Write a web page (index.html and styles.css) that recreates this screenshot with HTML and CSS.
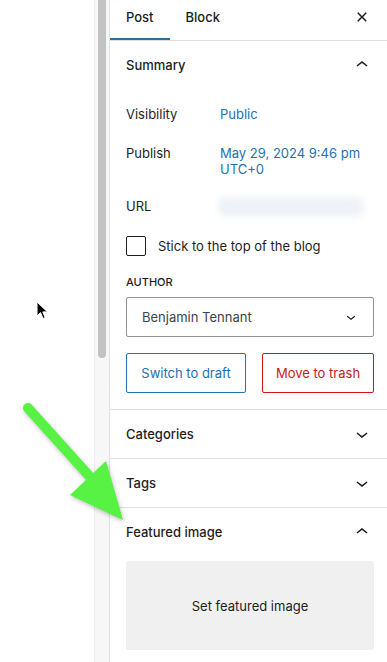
FILE: index.html
```html
<!DOCTYPE html>
<html lang="en">
<head>
<meta charset="utf-8">
<title>Post settings</title>
<link rel="stylesheet" href="styles.css">
</head>
<body>
<div class="app">
  <div class="canvas"></div>
  <div class="scrolltrack"><div class="thumb"></div></div>
  <aside class="sidebar">
    <div class="tabs">
      <div class="tab active">Post</div>
      <div class="tab">Block</div>
      <button class="close" aria-label="Close">
        <svg viewBox="0 0 24 24" width="24" height="24"><path d="M12 13.06l3.712 3.713 1.061-1.06L13.061 12l3.712-3.712-1.06-1.06L12 10.938 8.288 7.227l-1.061 1.06L10.939 12l-3.712 3.712 1.06 1.061L12 13.061z"/></svg>
      </button>
    </div>

    <section class="panel">
      <div class="panel-head">
        <span>Summary</span>
        <svg class="chev" viewBox="0 0 24 24" width="24" height="24"><path d="M6.5 12.4L12 8l5.5 4.4-.9 1.2L12 10l-4.6 3.6-.9-1.2z"/></svg>
      </div>
      <div class="summary-body">
        <div class="row row-vis"><span class="label">Visibility</span><span class="value">Public</span></div>
        <div class="row row-pub"><span class="label">Publish</span><span class="value">May 29, 2024 9:46 pm<br>UTC+0</span></div>
        <div class="row row-url"><span class="label">URL</span><span class="url-blur"></span></div>
        <label class="check-row"><span class="checkbox"></span><span>Stick to the top of the blog</span></label>
        <div class="author-label">AUTHOR</div>
        <div class="select">
          <span>Benjamin Tennant</span>
          <svg viewBox="0 0 24 24" width="18" height="18"><path d="M17.5 11.6L12 16l-5.5-4.4.9-1.2L12 14l4.6-3.6.9 1.2z"/></svg>
        </div>
        <div class="actions">
          <button class="btn btn-draft">Switch to draft</button>
          <button class="btn btn-trash">Move to trash</button>
        </div>
      </div>
    </section>

    <section class="panel">
      <div class="panel-head">
        <span>Categories</span>
        <svg class="chev" viewBox="0 0 24 24" width="24" height="24"><path d="M17.5 11.6L12 16l-5.5-4.4.9-1.2L12 14l4.6-3.6.9 1.2z"/></svg>
      </div>
    </section>

    <section class="panel">
      <div class="panel-head">
        <span>Tags</span>
        <svg class="chev" viewBox="0 0 24 24" width="24" height="24"><path d="M17.5 11.6L12 16l-5.5-4.4.9-1.2L12 14l4.6-3.6.9 1.2z"/></svg>
      </div>
    </section>

    <section class="panel">
      <div class="panel-head">
        <span>Featured image</span>
        <svg class="chev" viewBox="0 0 24 24" width="24" height="24"><path d="M6.5 12.4L12 8l5.5 4.4-.9 1.2L12 10l-4.6 3.6-.9-1.2z"/></svg>
      </div>
      <div class="featured-body">
        <div class="featured-box">Set featured image</div>
      </div>
    </section>
  </aside>
</div>

<svg class="cursor" viewBox="0 0 14 20" width="14" height="20">
  <path d="M1 1 L1 15 L4.5 11.6 L7 17.5 L9.2 16.6 L6.8 10.9 L11.5 10.9 Z" fill="#000" stroke="#fff" stroke-width="1"/>
</svg>

<svg class="arrow" viewBox="0 0 140 140" width="140" height="140">
  <line x1="8" y1="8" x2="80" y2="88" stroke="#58f244" stroke-width="10" stroke-linecap="round"/>
  <polygon points="50,95 86,61 103,120" fill="#58f244"/>
</svg>
</body>
</html>
```

FILE: styles.css
```css
* { box-sizing: border-box; }

html, body {
  margin: 0;
  padding: 0;
  background: #fff;
  overflow: hidden;
}

body {
  font-family: Inter, "Noto Sans", "Liberation Sans", sans-serif;
  font-size: 13px;
  color: #1e1e1e;
  width: 387px;
  height: 662px;
  position: relative;
}

.app {
  display: flex;
  height: 662px;
  overflow: hidden;
}

.canvas {
  width: 94px;
  flex: none;
  background: #fff;
}

.scrolltrack {
  width: 16px;
  flex: none;
  background: #f7f7f7;
  border-left: 1px solid #ececec;
  border-right: 1px solid #e2e2e2;
  padding: 0 3px;
}

.thumb {
  width: 8px;
  height: 358px;
  background: #c2c2c2;
  border-radius: 0 0 4px 4px;
}

.sidebar {
  width: 280px;
  flex: none;
  background: #fff;
}

.tabs {
  display: flex;
  align-items: flex-start;
  height: 41px;
  border-bottom: 1px solid #e0e0e0;
}

.tab {
  height: 40px;
  padding: 0 16px 6px;
  display: flex;
  align-items: center;
  font-weight: 500;
  font-size: 13px;
}

.tab.active {
  box-shadow: inset 0 -2px 0 #2e6f99;
}

.close {
  margin-left: auto;
  margin-right: 16px;
  margin-top: 5px;
  border: 0;
  background: none;
  padding: 0;
  width: 24px;
  height: 24px;
  display: flex;
}

.close svg, .chev { fill: #1e1e1e; }

.panel {
  border-bottom: 1px solid #e0e0e0;
}

.panel-head {
  height: 48px;
  display: flex;
  align-items: center;
  justify-content: space-between;
  padding: 0 16px;
  font-weight: 500;
}

.summary-body {
  padding: 8px 16px 16px;
  display: flex;
  flex-direction: column;
}

.row {
  display: flex;
}

.label {
  width: 94px;
  flex: none;
}

.value {
  color: #2271b1;
}

.row-vis {
  height: 34px;
  align-items: center;
}

.row-pub {
  padding-top: 14px;
  line-height: 16px;
}

.row-url {
  margin-top: 12px;
  height: 34px;
  align-items: center;
}

.url-blur {
  display: block;
  width: 146px;
  height: 20px;
  margin-top: 2px;
  margin-left: -2px;
  background: #eef2f7;
  border-radius: 8px;
  filter: blur(3px);
}

.check-row {
  margin-top: 13px;
  display: flex;
  align-items: center;
  gap: 12px;
  height: 20px;
}

.checkbox {
  width: 20px;
  height: 20px;
  border: 1.5px solid #1e1e1e;
  border-radius: 2px;
  flex: none;
}

.author-label {
  margin-top: 18px;
  line-height: 16px;
  font-size: 11px;
  font-weight: 500;
  text-transform: uppercase;
}

.select {
  margin-top: 7px;
  height: 40px;
  width: 248px;
  border: 1px solid #949494;
  border-radius: 2px;
  display: flex;
  align-items: center;
  justify-content: space-between;
  padding: 0 13px 0 15px;
  color: #3c434a;
}

.select svg { fill: #1e1e1e; }

.actions {
  margin-top: 16px;
  display: flex;
  gap: 16px;
}

.btn {
  height: 40px;
  background: #fff;
  border-radius: 2px;
  font-family: inherit;
  font-size: 13px;
  padding: 0;
  white-space: nowrap;
}

.btn-draft {
  width: 120px;
  border: 1px solid #2271b1;
  color: #2271b1;
}

.btn-trash {
  width: 112px;
  border: 1px solid #cc1818;
  color: #cc1818;
}

.featured-body {
  padding: 5px 16px 16px;
}

.featured-box {
  height: 89px;
  width: 248px;
  background: #f0f0f0;
  border-radius: 2px;
  display: flex;
  align-items: center;
  justify-content: center;
}

.cursor {
  position: absolute;
  left: 36px;
  top: 301px;
}

.arrow {
  position: absolute;
  left: 20px;
  top: 400px;
  filter: drop-shadow(1px 2px 2px rgba(0,0,0,0.25));
}
```
